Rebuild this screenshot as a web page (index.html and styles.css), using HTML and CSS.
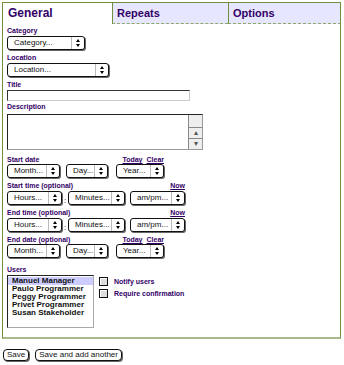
FILE: index.html
```html
<!DOCTYPE html>
<html lang="en">
  <head>
    <meta charset="UTF-8" />
    <title>New event</title>
    <link rel="stylesheet" href="styles.css">
  </head>
  <body>
    <div class="tabs">
      <div class="tab active">General</div>
      <div class="tab">Repeats</div>
      <div class="tab">Options</div>
    </div>

    <div class="panel">
      <div class="field f-category">
        <label>Category</label>
        <div class="popup w-category"><span>Category...</span><i></i></div>
      </div>

      <div class="field f-location">
        <label>Location</label>
        <div class="popup w-location"><span>Location...</span><i></i></div>
      </div>

      <div class="field f-title">
        <label>Title</label>
        <input type="text" class="text-input" />
      </div>

      <div class="field f-desc">
        <label>Description</label>
        <div class="textarea">
          <div class="textarea-body"></div>
          <div class="scrollbar">
            <div class="sb-track"></div>
            <div class="sb-btn">&#9652;</div>
            <div class="sb-btn">&#9662;</div>
          </div>
        </div>
      </div>

      <div class="field f-date">
        <div class="label-row">
          <label>Start date</label>
          <span class="links"><a href="#">Today</a> <a href="#">Clear</a></span>
        </div>
        <div class="row">
          <div class="popup w-month"><span>Month...</span><i></i></div>
          <div class="popup w-day"><span>Day...</span><i></i></div>
          <div class="popup w-year"><span>Year...</span><i></i></div>
        </div>
      </div>

      <div class="field f-time">
        <div class="label-row">
          <label>Start time (optional)</label>
          <span class="links"><a href="#">Now</a></span>
        </div>
        <div class="row">
          <div class="popup w-hours"><span>Hours...</span><i></i></div>
          <span class="colon">:</span>
          <div class="popup w-minutes"><span>Minutes...</span><i></i></div>
          <div class="popup w-ampm"><span>am/pm...</span><i></i></div>
        </div>
      </div>

      <div class="field f-time">
        <div class="label-row">
          <label>End time (optional)</label>
          <span class="links"><a href="#">Now</a></span>
        </div>
        <div class="row">
          <div class="popup w-hours"><span>Hours...</span><i></i></div>
          <span class="colon">:</span>
          <div class="popup w-minutes"><span>Minutes...</span><i></i></div>
          <div class="popup w-ampm"><span>am/pm...</span><i></i></div>
        </div>
      </div>

      <div class="field f-date">
        <div class="label-row">
          <label>End date (optional)</label>
          <span class="links"><a href="#">Today</a> <a href="#">Clear</a></span>
        </div>
        <div class="row">
          <div class="popup w-month"><span>Month...</span><i></i></div>
          <div class="popup w-day"><span>Day...</span><i></i></div>
          <div class="popup w-year"><span>Year...</span><i></i></div>
        </div>
      </div>

      <div class="field f-users">
        <label>Users</label>
        <div class="users-row">
          <div class="listbox">
            <div class="item selected">Manuel Manager</div>
            <div class="item">Paulo Programmer</div>
            <div class="item">Peggy Programmer</div>
            <div class="item">Privet Programmer</div>
            <div class="item">Susan Stakeholder</div>
          </div>
          <div class="checks">
            <div class="check"><span class="box"></span>Notify users</div>
            <div class="check"><span class="box"></span>Require confirmation</div>
          </div>
        </div>
      </div>
    </div>

    <div class="actions">
      <button class="btn">Save</button>
      <button class="btn">Save and add another</button>
    </div>
  </body>
</html>
```

FILE: styles.css
```css
* {
  margin: 0;
  padding: 0;
  box-sizing: border-box;
}

body {
  font-family: "Liberation Sans", Arial, sans-serif;
  background: white;
  color: #000;
  padding: 2px;
  width: 344px;
}

/* tabs */

.tabs {
  display: grid;
  grid-template-columns: 110px 116px 113px;
  height: 21px;
}

.tab {
  background: #e6e6ff;
  color: #330066;
  font-weight: bold;
  font-size: 11px;
  line-height: 20px;
  padding-left: 4px;
  border-top: 1px solid #6f8f3f;
  border-left: 1px solid #6f8f3f;
  border-bottom: 1px dashed #8ea86a;
}

.tab:last-child {
  border-right: 1px solid #6f8f3f;
}

.tab.active {
  background: white;
  border-bottom: none;
  font-size: 12px;
  padding-left: 5px;
}

/* panel */

.panel {
  width: 339px;
  height: 316px;
  border-left: 1px solid #6f8f3f;
  border-right: 1px solid #6f8f3f;
  border-bottom: 2px solid #a9b98a;
  padding: 4px 0 0 4px;
}

.field {
  width: fit-content;
}

.field label,
.label-row {
  display: block;
  font-size: 7px;
  font-weight: bold;
  color: #330066;
  line-height: 8px;
  height: 8px;
}

.f-category,
.f-location {
  margin-bottom: 4px;
}

.f-category label,
.f-location label,
.f-title label {
  margin-bottom: 1px;
}

.f-title {
  margin-bottom: 2px;
}

.f-desc label {
  margin-bottom: 3px;
}

.f-desc {
  margin-bottom: 6px;
}

.f-date,
.f-time {
  margin-bottom: 4px;
}

.f-time .label-row {
  margin-bottom: 1px;
}

.f-users {
  margin-top: 8px;
}

.f-users label {
  margin-bottom: 1px;
}

.label-row {
  display: flex;
  justify-content: space-between;
}

.links a {
  color: #330066;
  margin-left: 2px;
}

/* popups */

.row {
  display: flex;
  align-items: center;
}

.popup {
  position: relative;
  height: 14px;
  border: 1px solid #111;
  border-radius: 3px;
  box-shadow: 1px 1px 0 #666;
  background: white;
  font-size: 8px;
  line-height: 12px;
  padding-left: 6px;
  color: #111;
}

.popup i {
  position: absolute;
  right: 0;
  top: 0;
  width: 13px;
  height: 12px;
  border-left: 1px solid #bbb;
  font-style: normal;
}

.popup i::before,
.popup i::after {
  content: "";
  position: absolute;
  left: 4px;
  border-left: 2.5px solid transparent;
  border-right: 2.5px solid transparent;
}

.popup i::before {
  top: 2px;
  border-bottom: 3px solid #000;
}

.popup i::after {
  top: 7px;
  border-top: 3px solid #000;
}

.w-category { width: 78px; }
.w-location { width: 102px; }
.w-month { width: 53px; }
.w-day { width: 42px; margin-left: 6px; }
.w-year { width: 48px; margin-left: 8px; }
.w-hours { width: 55px; }
.w-minutes { width: 57px; }
.w-ampm { width: 55px; margin-left: 5px; }

.colon {
  width: 6px;
  text-align: center;
  font-size: 8px;
  padding-top: 4px;
}

/* text inputs */

.text-input {
  display: block;
  width: 183px;
  height: 11px;
  border: 1px solid #ccc;
  border-top-color: #333;
  border-left-color: #333;
  background: white;
}

.textarea {
  display: flex;
  width: 196px;
  height: 36px;
  border: 1px solid #222;
  border-right-color: #999;
  border-bottom-color: #999;
}

.textarea-body {
  flex: 1;
}

.scrollbar {
  width: 14px;
  border-left: 1px solid #888;
  display: flex;
  flex-direction: column;
  background: #eee;
}

.sb-track {
  flex: 1;
}

.sb-btn {
  height: 11px;
  border-top: 1px solid #888;
  font-size: 8px;
  line-height: 10px;
  text-align: center;
  color: #555;
}

/* users */

.users-row {
  display: flex;
  align-items: flex-start;
}

.listbox {
  width: 87px;
  height: 53px;
  border: 1px solid #222;
  border-right-color: #aaa;
  border-bottom-color: #aaa;
  padding-top: 1px;
  font-size: 8px;
  font-weight: bold;
}

.item {
  height: 8px;
  line-height: 8px;
  padding-left: 4px;
  color: #111;
}

.item.selected {
  background: #ccccff;
}

.checks {
  margin-left: 5px;
  padding-top: 1px;
}

.check {
  display: flex;
  align-items: center;
  height: 11px;
  margin-bottom: 1px;
  font-size: 7px;
  font-weight: bold;
  color: #330066;
}

.box {
  width: 9px;
  height: 9px;
  border: 1px solid #111;
  background: #ddd;
  box-shadow: inset 1px 1px 0 #fff;
  margin-right: 6px;
}

/* buttons */

.actions {
  display: flex;
  gap: 6px;
  margin-top: 10px;
  padding-left: 1px;
}

.btn {
  font-family: "Liberation Sans", Arial, sans-serif;
  font-size: 8px;
  height: 12px;
  line-height: 10px;
  padding: 0 3px;
  background: white;
  border: 1px solid #111;
  border-radius: 4px;
  box-shadow: 1px 1px 0 #666;
  color: #111;
}
```
